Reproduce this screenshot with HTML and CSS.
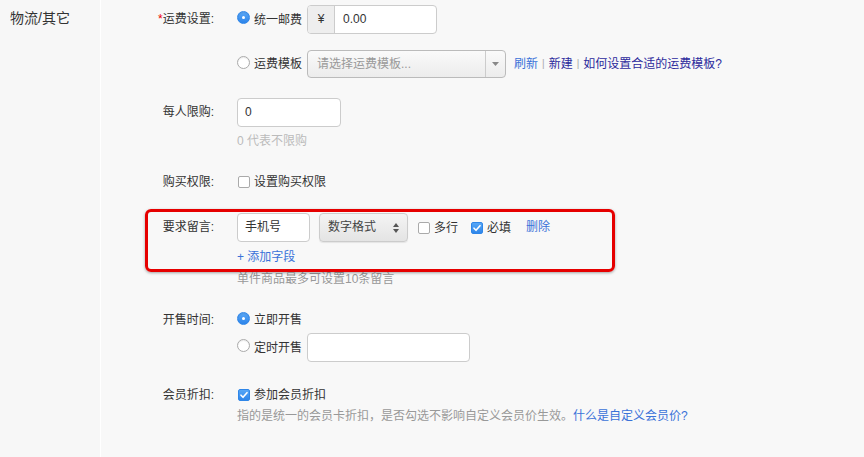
FILE: index.html
```html
<!DOCTYPE html>
<html lang="zh-CN">
<head>
    <meta charset="UTF-8">
    <meta name="viewport" content="width=device-width, initial-scale=1.0">
    <title>物流/其它</title>
    <link rel="stylesheet" href="styles.css">
</head>
<body>
<div class="page">
    <div class="side">
        <h3 class="side-title">物流/其它</h3>
    </div>
    <div class="form">
        <!-- 运费设置 -->
        <div class="row">
            <div class="row-label h29"><span class="req">*</span>运费设置:</div>
            <div class="controls">
                <div class="line h29">
                    <span class="radio checked"></span>
                    <span class="opt">统一邮费</span>
                    <div class="input-group">
                        <span class="addon">¥</span>
                        <span class="input-text">0.00</span>
                    </div>
                </div>
                <div class="line h28 mt16">
                    <span class="radio"></span>
                    <span class="opt">运费模板</span>
                    <div class="select-box">
                        <span class="placeholder">请选择运费模板...</span>
                        <span class="select-arrow">
                            <svg width="7" height="4" viewBox="0 0 7 4"><path d="M0 0h7L3.5 4z" fill="#888"/></svg>
                        </span>
                    </div>
                    <a class="link" href="#">刷新</a>
                    <span class="sep">|</span>
                    <a class="link visited" href="#">新建</a>
                    <span class="sep">|</span>
                    <a class="link visited" href="#">如何设置合适的运费模板?</a>
                </div>
            </div>
        </div>

        <!-- 每人限购 -->
        <div class="row mt20">
            <div class="row-label h29">每人限购:</div>
            <div class="controls">
                <div class="line h29">
                    <div class="input w104">0</div>
                </div>
                <div class="hint light mt6">0 代表不限购</div>
            </div>
        </div>

        <!-- 购买权限 -->
        <div class="row mt23">
            <div class="row-label h20">购买权限:</div>
            <div class="controls">
                <div class="line h20">
                    <span class="checkbox"></span>
                    <span class="opt">设置购买权限</span>
                </div>
            </div>
        </div>

        <!-- 要求留言 -->
        <div class="row mt21 marked">
            <div class="mark"></div>
            <div class="row-label h29">要求留言:</div>
            <div class="controls">
                <div class="line h29">
                    <div class="input w73">手机号</div>
                    <div class="select-small">
                        <span>数字格式</span>
                        <svg width="6" height="10" viewBox="0 0 6 10"><path d="M0 4L3 0l3 4zM0 6h6L3 10z" fill="#555"/></svg>
                    </div>
                    <span class="checkbox gap10"></span>
                    <span class="opt">多行</span>
                    <span class="checkbox checked gap8">
                        <svg width="12" height="12" viewBox="0 0 12 12"><path d="M3 6.2l2 2.1 4-4.6" fill="none" stroke="#fff" stroke-width="1.6" stroke-linecap="round" stroke-linejoin="round"/></svg>
                    </span>
                    <span class="opt">必填</span>
                    <a class="link gap10" href="#">删除</a>
                </div>
                <div class="mt7 lh16"><a class="link" href="#">+ 添加字段</a></div>
                <div class="hint mt6">单件商品最多可设置10条留言</div>
            </div>
        </div>

        <!-- 开售时间 -->
        <div class="row mt23">
            <div class="row-label h20">开售时间:</div>
            <div class="controls">
                <div class="line h20">
                    <span class="radio checked"></span>
                    <span class="opt">立即开售</span>
                </div>
                <div class="line h29 mt3">
                    <span class="radio"></span>
                    <span class="opt">定时开售</span>
                    <div class="input w163"></div>
                </div>
            </div>
        </div>

        <!-- 会员折扣 -->
        <div class="row mt23">
            <div class="row-label h20">会员折扣:</div>
            <div class="controls">
                <div class="line h20">
                    <span class="checkbox checked">
                        <svg width="12" height="12" viewBox="0 0 12 12"><path d="M3 6.2l2 2.1 4-4.6" fill="none" stroke="#fff" stroke-width="1.6" stroke-linecap="round" stroke-linejoin="round"/></svg>
                    </span>
                    <span class="opt">参加会员折扣</span>
                </div>
                <div class="hint mt3">指的是统一的会员卡折扣，是否勾选不影响自定义会员价生效。<a class="link" href="#">什么是自定义会员价?</a></div>
            </div>
        </div>
    </div>
</div>
</body>
</html>
```

FILE: styles.css
```css
body {
    margin: 0;
    background: #f8f8f8;
    font-family: "Liberation Sans", "Noto Sans CJK SC", sans-serif;
    font-size: 12px;
    color: #333;
}
.page {
    display: flex;
    min-height: 457px;
}
.side {
    width: 100px;
    border-right: 1px solid #fff;
    background: #f7f7f7;
}
.side-title {
    margin: 8px 0 0 10px;
    font-size: 14px;
    line-height: 20px;
    font-weight: normal;
    color: #333;
}
.form {
    flex: 1;
    padding-top: 5px;
}
.row {
    display: flex;
    align-items: flex-start;
}
.row-label {
    width: 113px;
    margin-right: 23px;
    text-align: right;
    color: #333;
}
.req {
    color: #e00;
}
.h20 { height: 20px; line-height: 20px; }
.h28 { height: 28px; line-height: 28px; }
.h29 { height: 29px; line-height: 29px; }
.lh16 { line-height: 16px; }
.mt3 { margin-top: 3px; }
.mt6 { margin-top: 6px; }
.mt7 { margin-top: 7px; }
.mt16 { margin-top: 16px; }
.mt20 { margin-top: 20px; }
.mt21 { margin-top: 21px; }
.mt23 { margin-top: 23px; }

.controls {
    display: flex;
    flex-direction: column;
}
.line {
    display: flex;
    align-items: center;
}
.opt {
    margin-left: 4px;
    margin-right: 5px;
    line-height: 16px;
}

/* radio / checkbox */
.radio {
    width: 11px;
    height: 11px;
    border: 1px solid #aaa;
    border-radius: 50%;
    background: #fff;
    margin-bottom: 4px;
    box-shadow: inset 0 1px 1px rgba(0,0,0,0.08);
    position: relative;
    flex: none;
}
.radio.checked {
    border-color: #2f86e8;
    background: linear-gradient(#5aa8f7, #2c84ea);
}
.radio.checked::after {
    content: "";
    position: absolute;
    left: 4px;
    top: 4px;
    width: 3px;
    height: 3px;
    border-radius: 50%;
    background: #fff;
}
.checkbox {
    width: 10px;
    height: 10px;
    margin-left: 1px;
    border: 1px solid #aaa;
    border-radius: 2px;
    background: #fff;
    flex: none;
    display: flex;
}
.checkbox.checked {
    border-color: #2f86e8;
    background: linear-gradient(#56a6f6, #2f86ea);
}
.checkbox svg {
    margin: -1px;
}
.gap8 { margin-left: 8px; }
.gap10 { margin-left: 10px; }

/* inputs */
.input {
    height: 27px;
    line-height: 27px;
    border: 1px solid #ccc;
    border-radius: 4px;
    background: #fff;
    padding: 0 7px;
    box-sizing: content-box;
}
.w104 { width: 88px; }
.w73 { width: 57px; }
.w163 { width: 147px; }
.input-group {
    display: flex;
    width: 128px;
    height: 27px;
    line-height: 27px;
    border: 1px solid #ccc;
    border-radius: 4px;
    background: #fff;
    overflow: hidden;
}
.addon {
    width: 26px;
    text-align: center;
    background: #eee;
    border-right: 1px solid #ccc;
}
.input-text {
    padding-left: 8px;
}
.select-box {
    display: flex;
    width: 197px;
    height: 26px;
    line-height: 26px;
    border: 1px solid #bbb;
    border-radius: 4px;
    background: linear-gradient(#fafafa, #ececec);
    margin-right: 8px;
}
.placeholder {
    flex: 1;
    padding-left: 9px;
    color: #999;
}
.select-arrow {
    width: 19px;
    border-left: 1px solid #ccc;
    display: flex;
    align-items: center;
    justify-content: center;
}
.select-small {
    display: flex;
    align-items: center;
    justify-content: space-between;
    width: 71px;
    height: 27px;
    margin-left: 9px;
    padding: 0 8px 0 8px;
    border: 1px solid #ccc;
    border-radius: 4px;
    background: linear-gradient(#f4f4f4, #e4e4e4);
    box-shadow: 0 1px 1px rgba(0,0,0,0.08);
    color: #444;
    box-sizing: content-box;
}
.link {
    color: #3a72d8;
    text-decoration: none;
}
.link.visited {
    color: #2c2a9c;
}
.sep {
    color: #aaa;
    font-size: 10px;
    margin: 0 4px;
}
.hint {
    line-height: 16px;
    color: #999;
}
.hint.light {
    color: #bbb;
}

/* red annotation frame over the message row */
.marked {
    position: relative;
}
.mark {
    position: absolute;
    left: 44px;
    top: -4px;
    width: 464px;
    height: 57px;
    border: 3px solid #e60000;
    border-radius: 6px;
    box-shadow: 0 1px 3px rgba(0,0,0,0.35);
    pointer-events: none;
}
```
